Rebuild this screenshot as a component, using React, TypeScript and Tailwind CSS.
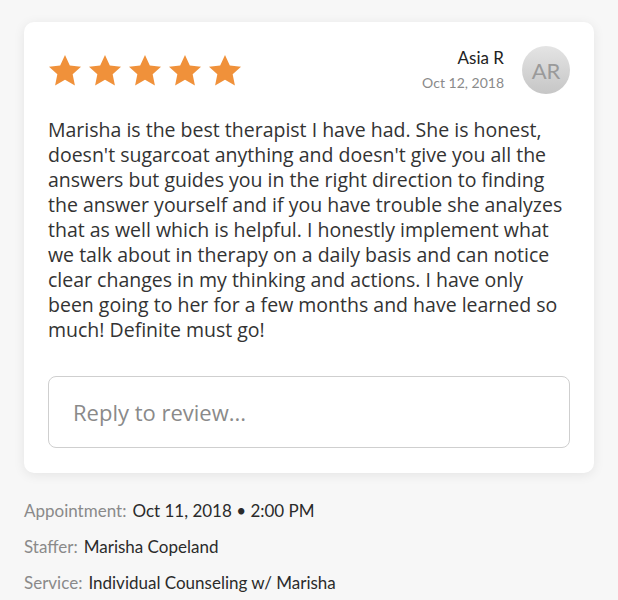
import React from 'react';

const Star = () => (
  <svg width="34" height="33" viewBox="0 0 24 23" className="shrink-0">
    <path
      d="M12 0.6l3.4 7.3 7.9 0.9-5.9 5.4 1.6 7.8L12 18.1 5 22l1.6-7.8L0.7 8.8l7.9-0.9z"
      fill="#f0913a"
    />
  </svg>
);

const reviewLines = [
  'Marisha is the best therapist I have had. She is honest,',
  "doesn't sugarcoat anything and doesn't give you all the",
  'answers but guides you in the right direction to finding',
  'the answer yourself and if you have trouble she analyzes',
  'that as well which is helpful. I honestly implement what',
  'we talk about in therapy on a daily basis and can notice',
  'clear changes in my thinking and actions. I have only',
  'been going to her for a few months and have learned so',
  'much! Definite must go!',
];

const DetailRow = ({ label, value }: { label: string; value: string }) => (
  <div className="h-[36px] flex items-center gap-[6px] text-[17px]">
    <span className="text-[#8a8a8a]">{label}</span>
    <span className="text-[#2b2b2b]">{value}</span>
  </div>
);

export default function App() {
  return (
    <div
      className="min-h-[600px] bg-[#f7f7f7] pt-[22px] px-[24px] overflow-hidden"
      style={{ fontFamily: 'Lato, "Open Sans", sans-serif' }}
    >
      <div className="bg-white rounded-[10px] shadow-[0_2px_12px_rgba(0,0,0,0.08)] px-[24px] pt-[24px] pb-[25px]">
        <div className="flex items-center justify-between h-[48px]">
          <div className="flex items-center gap-[6px]">
            <Star />
            <Star />
            <Star />
            <Star />
            <Star />
          </div>
          <div className="flex items-center gap-[18px]">
            <div className="flex flex-col items-end">
              <span className="text-[17px] leading-[22px] text-[#222]">Asia R</span>
              <span className="text-[14px] leading-[22px] text-[#8a8a8a] mt-[3px]">Oct 12, 2018</span>
            </div>
            <div className="w-[48px] h-[48px] rounded-full bg-gradient-to-b from-[#e4e4e4] to-[#c6c6c6] flex items-center justify-center text-[22px] text-[#9a9a9a]">
              AR
            </div>
          </div>
        </div>
        <div
          className="mt-[23px] text-[19.5px] leading-[25px] text-[#333]"
          style={{ fontFamily: '"Open Sans", sans-serif' }}
        >
          {reviewLines.map((l) => (
            <div key={l} className="whitespace-nowrap">
              {l}
            </div>
          ))}
        </div>
        <div
          className="mt-[34px] h-[72px] rounded-[8px] border border-[#cfcfcf] flex items-center px-[24px] text-[22px] text-[#8a8a8a]"
          style={{ fontFamily: '"Open Sans", sans-serif' }}
        >
          Reply to review...
        </div>
      </div>
      <div className="mt-[20px]">
        <DetailRow label="Appointment:" value="Oct 11, 2018 • 2:00 PM" />
        <DetailRow label="Staffer:" value="Marisha Copeland" />
        <DetailRow label="Service:" value="Individual Counseling w/ Marisha" />
      </div>
    </div>
  );
}
